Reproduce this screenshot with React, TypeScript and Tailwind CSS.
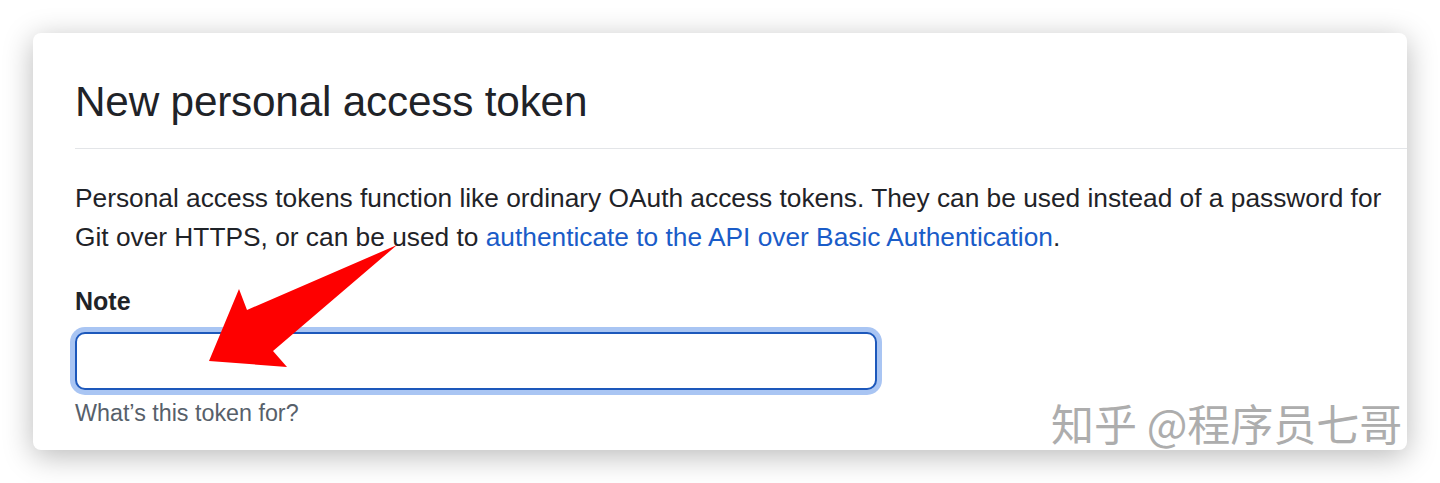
export default function App() {
  return (
    <div className="relative w-[1440px] h-[483px] overflow-hidden bg-white font-['Liberation_Sans',Arial,sans-serif] text-[#1f2328]">
      {/* Card */}
      <div className="ml-[33px] mt-[33px] w-[1374px] h-[417px] rounded-[8px] bg-white pl-[42px] pt-[43px] shadow-[0_6px_30px_rgba(0,0,0,0.28)]">
        <h1 className="text-[42.3px] leading-[52px] font-normal tracking-[-0.2px]">New personal access token</h1>
        <div className="mt-[20px] border-b border-[#e3e5e8]" />

        <p className="mt-[30px] w-[1320px] text-[26.3px] leading-[39px]">
          Personal access tokens function like ordinary OAuth access tokens. They can be used instead of a password for
          Git over HTTPS, or can be used to <a href="#" className="text-[#1a5cc8]">authenticate to the API over Basic Authentication</a>.
        </p>

        <label className="mt-[28px] block text-[25px] leading-[32px] font-bold">Note</label>
        <input
          type="text"
          className="mt-[15px] block w-[802px] h-[58px] rounded-[10px] border-2 border-[#1d58bb] bg-white outline-none ring-[5px] ring-[#a9c5f3]"
        />
        <p className="mt-[9px] text-[23.3px] leading-[28px] text-[#57606a]">What’s this token for?</p>
      </div>

      {/* Red arrow annotation */}
      <svg className="absolute left-0 top-0" width="1440" height="483" viewBox="0 0 1440 483">
        <polygon points="397,245 247,310 239,289 209,361 287,367 273,351" fill="#fe0000" />
      </svg>

      {/* Watermark */}
      <div className="absolute left-[1051px] top-[396px] text-[43px] leading-[52px] text-[#adadad] font-['Noto_Sans_CJK_SC',sans-serif] [text-shadow:0_0_2px_#fff]">
        知乎 @程序员七哥
      </div>
    </div>
  );
}
